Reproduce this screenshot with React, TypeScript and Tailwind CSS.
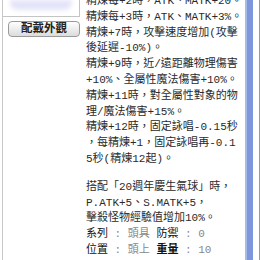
const lines: { text: string; gapBefore?: boolean }[] = [
  { text: '精煉每+2時，ATK、MATK+20。' },
  { text: '精煉每+3時，ATK、MATK+3%。' },
  { text: '精煉+7時，攻擊速度增加(攻擊' },
  { text: '後延遲-10%)。' },
  { text: '精煉+9時，近/遠距離物理傷害' },
  { text: '+10%、全屬性魔法傷害+10%。' },
  { text: '精煉+11時，對全屬性對象的物' },
  { text: '理/魔法傷害+15%。' },
  { text: '精煉+12時，固定詠唱-0.15秒' },
  { text: '，每精煉+1，固定詠唱再-0.1' },
  { text: '5秒(精煉12起)。' },
  { text: '搭配「20週年慶生氣球」時，', gapBefore: true },
  { text: 'P.ATK+5、S.MATK+5，' },
  { text: '擊殺怪物經驗值增加10%。' },
];

const font = '[font-family:"Liberation_Mono","Noto_Sans_CJK_TC",monospace]';

export default function App() {
  return (
    <div className="w-[260px] h-[260px] overflow-hidden bg-white flex">
      {/* left panel */}
      <div className="ml-[2px] w-[84px] border-l border-[#c8c8c8] flex flex-col">
        <div className="w-[77px] h-[17px] border-r border-b border-[#c4c4c4] flex justify-center">
          <div className="w-[62px] h-[10px] rounded-b-[8px] bg-[#e4e4f8] blur-[2px]" />
        </div>
        <button
          className={`mt-[4px] ml-[5px] w-[72px] h-[16px] rounded-[4px] border border-[#9a9a9a] bg-gradient-to-b from-white to-[#dcdcdc] text-[11.5px] font-bold text-[#222] leading-none flex items-center justify-center ${font}`}
        >
          配戴外觀
        </button>
      </div>

      {/* description */}
      <div className={`w-[157px] mt-[-6px] text-[11px] leading-[15.8px] text-[#2a2a2a] ${font}`}>
        {lines.map((l, i) => (
          <div key={i} className={`whitespace-nowrap ${l.gapBefore ? 'mt-[12px]' : ''}`}>
            {l.text}
          </div>
        ))}
        <div className="whitespace-nowrap">
          <span className="text-[#111]">系列</span>
          <span className="text-[#888]"> : 頭具 </span>
          <span className="text-[#111]">防禦</span>
          <span className="text-[#888]"> : 0</span>
        </div>
        <div className="whitespace-nowrap">
          <span className="text-[#111]">位置</span>
          <span className="text-[#888]"> : 頭上 </span>
          <span className="text-[#111] font-bold">重量</span>
          <span className="text-[#888]"> : 10</span>
        </div>
      </div>

      {/* scrollbar */}
      <div className="ml-[2px] w-[8px] h-full bg-[#7e97dc] border-l-2 border-[#a9baea]" />
      <div className="w-[6px] h-full bg-white" />
      <div className="w-[1px] h-full bg-[#9a9a9a]" />
      <div className="flex-1 h-full bg-[#d9d2c4]" />
    </div>
  );
}
